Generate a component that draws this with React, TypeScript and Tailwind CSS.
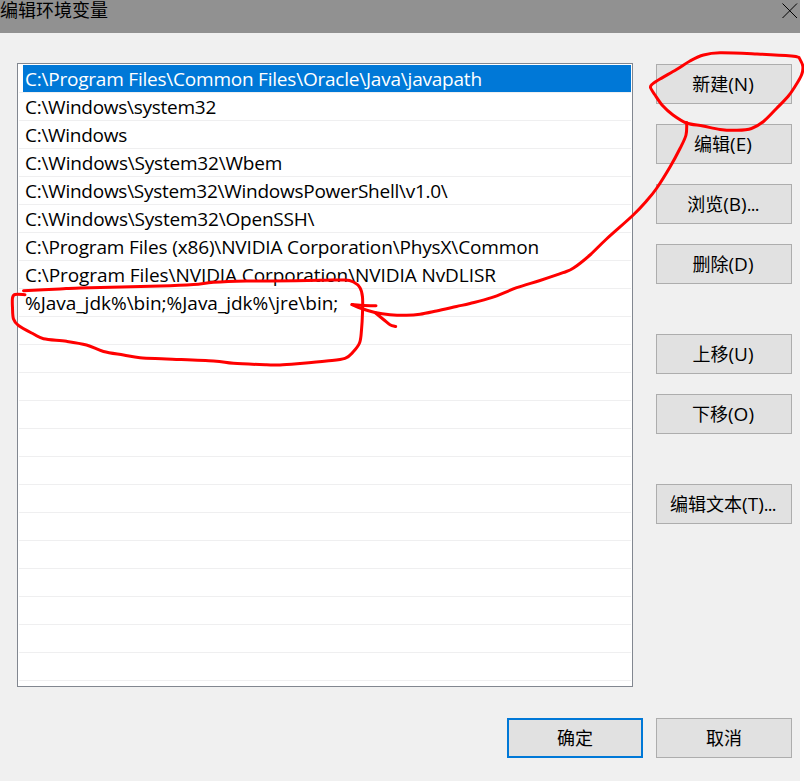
import clsx from "clsx";

type Point = [number, number];

const paths = [
  { text: "C:\\Program Files\\Common Files\\Oracle\\Java\\javapath", spacing: "tracking-[-0.22px]" },
  { text: "C:\\Windows\\system32", spacing: "tracking-[-0.27px]" },
  { text: "C:\\Windows", spacing: "tracking-[-0.28px]" },
  { text: "C:\\Windows\\System32\\Wbem", spacing: "tracking-[-0.2px]" },
  { text: "C:\\Windows\\System32\\WindowsPowerShell\\v1.0\\", spacing: "tracking-[-0.26px]" },
  { text: "C:\\Windows\\System32\\OpenSSH\\", spacing: "tracking-[-0.2px]" },
  { text: "C:\\Program Files (x86)\\NVIDIA Corporation\\PhysX\\Common", spacing: "tracking-[-0.15px]" },
  { text: "C:\\Program Files\\NVIDIA Corporation\\NVIDIA NvDLISR", spacing: "tracking-[-0.08px]" },
  { text: "%Java_jdk%\\bin;%Java_jdk%\\jre\\bin;", spacing: "tracking-[-0.02px]" },
];

const emptyRows = Array.from({ length: 13 });

/* Freehand marks drawn over the dialog */
const strokes: Point[][] = [
  // loop around the first button
  [
    [799, 57.5], [791.5, 56], [757, 54], [720, 52.8], [703.5, 55], [690, 61], [676.5, 69.5],
    [660, 79], [652.5, 84], [650.5, 87.5], [655, 95], [662.5, 105.5], [673, 115], [686.5, 123],
    [703, 126], [720, 129.5], [737, 130.3], [751.5, 128.5], [763.5, 121.5], [776.5, 108.5],
    [788, 96.5], [795, 86.5], [801.5, 75], [802.8, 66], [799, 57.5],
  ],
  // arrow from the button to the last entry
  [
    [686.7, 122.5], [686, 135], [680, 148.5], [670, 167], [656.5, 188.5], [646.5, 201],
    [632.7, 215.5], [606.5, 239], [590, 255], [573.5, 268], [563, 272.7], [540, 280.5],
    [516.7, 287.7], [491.5, 297.7], [470, 303.5], [456.5, 306.5], [436.5, 311], [420, 314.3],
    [406.5, 315.3], [390, 314.7], [375, 312.5], [361.5, 308.5], [352, 304.5],
  ],
  [[352, 304.5], [364, 305.5], [376, 305.7]],
  [[375, 312.5], [383.5, 319.5], [390, 324.7], [395.7, 326.5]],
  // loop around the last entry
  [
    [23.5, 290.7], [60, 289], [80, 288], [160, 286], [193.5, 284.5], [213.5, 282.3],
    [246.5, 281], [270, 281], [320, 280.3], [345, 280], [353.5, 282], [360, 287.7],
    [362.5, 297], [362.5, 313], [361.5, 330], [359.7, 342.5], [353.5, 351.5], [345, 358.3],
    [326.5, 361], [300, 363.5], [280, 365], [266.5, 364.8], [233.5, 363.3], [213.5, 361],
    [166.5, 359], [140, 357.8], [123.5, 355], [103.5, 351.5], [86.5, 345], [66.5, 341.3],
    [43.5, 338.7], [33.5, 334], [18.5, 325.5], [13.5, 319], [12.5, 308], [12.5, 298],
    [15, 294.5], [25, 294.7],
  ],
];

const toPath = (pts: Point[]) => {
  let d = `M${pts[0][0]} ${pts[0][1]}`;
  for (let i = 0; i < pts.length - 1; i++) {
    const a = pts[i - 1] || pts[i];
    const b = pts[i];
    const c = pts[i + 1];
    const e = pts[i + 2] || c;
    d += `C${b[0] + (c[0] - a[0]) / 6} ${b[1] + (c[1] - a[1]) / 6} ${c[0] - (e[0] - b[0]) / 6} ${c[1] - (e[1] - b[1]) / 6} ${c[0]} ${c[1]}`;
  }
  return d;
};

interface DialogButtonProps {
  label: string;
  hotkey?: string;
  more?: boolean;
  primary?: boolean;
}

const DialogButton = ({ label, hotkey, more, primary }: DialogButtonProps) => (
  <button
    className={clsx(
      "flex h-10 w-[136px] shrink-0 items-center justify-center bg-[#e1e1e1] text-[18px] leading-none whitespace-nowrap",
      primary ? "border-2 border-[#0078d7]" : "border border-[#adadad]",
      hotkey && "pr-0.5"
    )}
  >
    <span>
      {label}
      {hotkey && <span className="text-[19px]">({hotkey})</span>}
      {more && <span className="text-[18px] tracking-[-0.7px]">...</span>}
    </span>
  </button>
);

const App = () => {
  return (
    <div className="relative h-[781px] w-[804px] bg-white font-['Open_Sans','Noto_Sans_CJK_SC',sans-serif] text-black">
      <div className="flex h-full w-[800px] flex-col bg-[#f0f0f0]">

        {/* Title bar */}
        <header className="flex h-[33px] shrink-0 items-start justify-between bg-[#919191] pr-0.5">
          <h1 className="text-[18px] leading-[21px]">编辑环境变量</h1>
          <svg className="mt-[3px] h-4 w-4" viewBox="0 0 16 16" stroke="black" fill="none">
            <path d="M0.5 0.5L15 15M15 0.5L0.5 15" />
          </svg>
        </header>

        <main className="flex justify-between pt-[30px] pr-2 pl-[17px]">
          {/* Path entries */}
          <ul className="h-[624px] w-[616px] border border-[#828790] bg-white px-px pt-px">
            {paths.map((p, i) => (
              <li key={p.text} className="h-7 border-b border-[#efeff0] pl-1">
                <div
                  className={clsx(
                    "h-[27px] pl-0.5 text-[19px] leading-[28px] whitespace-pre",
                    p.spacing,
                    i === 0 && "bg-[#0078d7] text-white"
                  )}
                >
                  {p.text}
                </div>
              </li>
            ))}
            {emptyRows.map((_, i) => (
              <li key={i} className="h-7 border-b border-[#efeff0]" />
            ))}
          </ul>

          <div className="flex flex-col gap-5 pt-px">
            <DialogButton label="新建" hotkey="N" />
            <DialogButton label="编辑" hotkey="E" />
            <DialogButton label="浏览" hotkey="B" more />
            <DialogButton label="删除" hotkey="D" />
            <div className="mt-[30px] flex flex-col gap-5">
              <DialogButton label="上移" hotkey="U" />
              <DialogButton label="下移" hotkey="O" />
            </div>
            <div className="mt-[30px]">
              <DialogButton label="编辑文本" hotkey="T" more />
            </div>
          </div>
        </main>

        <footer className="mt-[31px] flex justify-end gap-[13px] pr-2">
          <DialogButton label="确定" primary />
          <DialogButton label="取消" />
        </footer>
      </div>

      <svg
        className="pointer-events-none absolute inset-0 h-[781px] w-[804px]"
        viewBox="0 0 804 781"
        fill="none"
        stroke="#ff0000"
        strokeWidth="3"
        strokeLinecap="round"
        strokeLinejoin="round"
      >
        {strokes.map((pts, i) => (
          <path key={i} d={toPath(pts)} />
        ))}
      </svg>
    </div>
  );
};

export default App;
